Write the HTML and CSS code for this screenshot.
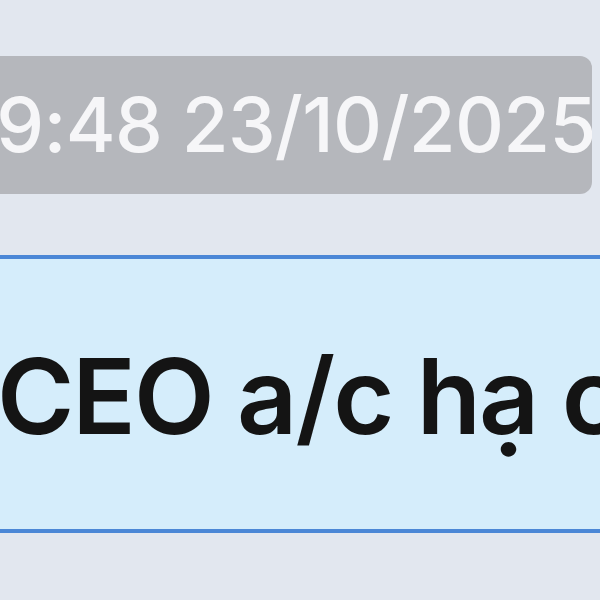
FILE: index.html
```html
<!DOCTYPE html>
<html lang="vi">
<head>
    <meta charset="UTF-8">
    <meta name="viewport" content="width=device-width, initial-scale=1.0">
    <title>Tin nhắn</title>
    <link rel="stylesheet" href="styles.css">
</head>
<body>
    <div class="chat">
        <div class="stamp">
            <span class="stamp-text">09:48 23/10/2025</span>
        </div>
        <div class="message">
            <span class="message-text">CEO a/c hạ chốt</span>
        </div>
    </div>
</body>
</html>
```
FILE: styles.css
```css
* {
    margin: 0;
    padding: 0;
    box-sizing: border-box;
}
body {
    width: 600px;
    height: 600px;
    overflow: hidden;
    background: #e2e7ef;
    font-family: Inter, "Noto Sans", sans-serif;
}
.chat {
    display: flex;
    flex-direction: column;
    padding-top: 56px;
}
.stamp {
    width: 592px;
    height: 138px;
    background: #b5b7bc;
    border-radius: 0 12px 12px 0;
    display: flex;
    align-items: center;
    overflow: hidden;
    white-space: nowrap;
}
.stamp-text {
    margin-left: -52px;
    margin-top: -2px;
    font-size: 76px;
    font-weight: 500;
    letter-spacing: -0.7px;
    color: #f6f6f8;
}
.message {
    margin-top: 61px;
    height: 278px;
    background: #d5edfb;
    border-top: 4px solid #4b87d6;
    border-bottom: 4px solid #4b87d6;
    display: flex;
    align-items: center;
    overflow: hidden;
    white-space: nowrap;
}
.message-text {
    margin-left: -3px;
    margin-top: 2px;
    font-size: 105px;
    font-weight: 600;
    letter-spacing: -2px;
    color: #141414;
}
```
